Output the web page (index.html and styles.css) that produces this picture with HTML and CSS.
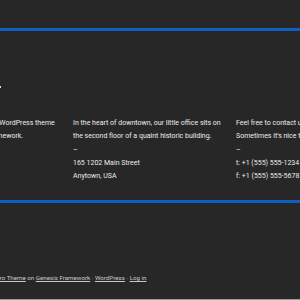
FILE: index.html
```html
<!DOCTYPE html>
<html lang="en">
<head>
  <meta charset="UTF-8">
  <title>Footer Widgets</title>
  <link rel="stylesheet" href="styles.css">
</head>
<body>
  <div class="page">
    <div class="top-area">
      <span class="dot"></span>
    </div>

    <div class="footer-widgets">
      <div class="widget">
        <p>This is a modern and simple WordPress theme<br>and built on the Genesis Framework.</p>
      </div>
      <div class="widget">
        <p>In the heart of downtown, our little office sits on<br>the second floor of a quaint historic building.<br>–<br>165 1202 Main Street<br>Anytown, USA</p>
      </div>
      <div class="widget">
        <p>Feel free to contact us with any questions.<br>Sometimes it's nice to just say hello too.<br>–<br>t: +1 (555) 555-1234<br>f: +1 (555) 555-5678</p>
      </div>
    </div>

    <footer class="site-footer">
      <p>Copyright © 2015 · <a href="#">Altitude Pro Theme</a> on <a href="#">Genesis Framework</a> · <a href="#">WordPress</a> · <a href="#">Log in</a></p>
    </footer>
  </div>
</body>
</html>
```

FILE: styles.css
```css
body {
  margin: 0;
  background: #272727;
  color: #ececec;
  font-family: Roboto, "Liberation Sans", sans-serif;
  font-size: 7px;
  overflow: hidden;
}
.page {
  margin-left: -90px;
  width: 480px;
}
.top-area {
  margin-top: 28px;
  border-top: 3px solid #0d60c2;
  height: 86px;
  position: relative;
}
.dot {
  position: absolute;
  left: 89px;
  top: 55px;
  width: 2px;
  height: 2px;
  background: #f3d9c2;
}
.footer-widgets {
  display: grid;
  grid-template-columns: 147px 147px 147px;
  column-gap: 16px;
  height: 83px;
  border-bottom: 3px solid #0d60c2;
}
.widget p {
  margin: 0;
  line-height: 13.3px;
  white-space: nowrap;
}
.site-footer {
  height: 96px;
  border-bottom: 1px solid #9a9a9a;
}
.site-footer p {
  margin: 0;
  padding: 71px 0 0 10px;
  font-size: 6.2px;
  color: #c8c8c8;
}
.site-footer a {
  color: #c8c8c8;
}
```
